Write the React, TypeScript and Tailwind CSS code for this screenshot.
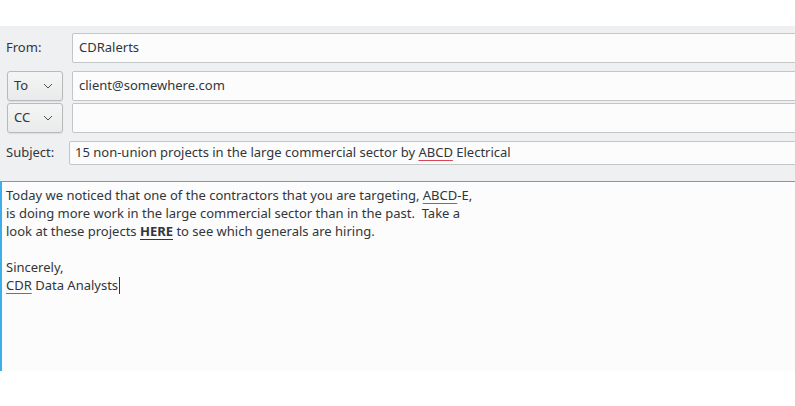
import React from "react";

const Chevron = () => (
  <svg width="10" height="6" viewBox="0 0 10 6" className="text-[#4d5257]">
    <path d="M1 1l4 4 4-4" fill="none" stroke="currentColor" strokeWidth="1" />
  </svg>
);

const Combo = ({ label }: { label: string }) => (
  <div className="flex h-[30px] w-[56px] shrink-0 items-center justify-between rounded-[3px] border border-[#b8babc] bg-gradient-to-b from-[#f5f5f5] to-[#e9eaeb] pl-[6px] pr-[9px] shadow-[0_1px_1px_rgba(0,0,0,0.08)]">
    <span>{label}</span>
    <Chevron />
  </div>
);

const Field = ({ children, className = "" }: { children?: React.ReactNode; className?: string }) => (
  <div
    className={`-mr-[4px] flex flex-1 items-center whitespace-pre rounded-[2px] border border-[#c3c5c7] bg-[#fcfcfc] ${className}`}
  >
    {children}
  </div>
);

const Misspelled = ({ children }: { children: React.ReactNode }) => (
  <span className="underline decoration-[#da4453] decoration-1 underline-offset-[3px]">{children}</span>
);

export default function App() {
  return (
    <div className="h-[406px] w-[795px] overflow-hidden bg-white font-['Noto_Sans',sans-serif] text-[13px] text-[#31363b]">
      <div className="h-[26px]" />
      <div className="flex flex-col bg-[#eff0f1] pt-[7px] pb-[16px]">
        <div className="flex h-[30px] items-center">
          <span className="w-[72px] shrink-0 pl-[6px]">From:</span>
          <Field className="h-[30px] pl-[6px]">CDRalerts</Field>
        </div>
        <div className="mt-[8px] flex h-[30px] items-center gap-[9px] pl-[7px]">
          <Combo label="To" />
          <Field className="h-[30px] pl-[6px]">client@somewhere.com</Field>
        </div>
        <div className="mt-[2px] flex h-[30px] items-center gap-[9px] pl-[7px]">
          <Combo label="CC" />
          <Field className="h-[30px] pl-[6px]" />
        </div>
        <div className="mt-[8px] flex h-[24px] items-center">
          <span className="w-[69px] shrink-0 pl-[6px]">Subject:</span>
          <Field className="h-[24px] pl-[5px]">
            15 non-union projects in the large commercial sector by <Misspelled>ABCD</Misspelled> Electrical
          </Field>
        </div>
      </div>
      <div className="-mr-[4px] h-[190px] whitespace-pre border-t border-l-2 border-[#3daee9] bg-[#fcfcfc] pl-[4px] pt-[4px] leading-[18px]">
        <p>
          Today we noticed that one of the contractors that you are targeting, <Misspelled>ABCD</Misspelled>-E,
        </p>
        <p>is doing more work in the large commercial sector than in the past.  Take a</p>
        <p>
          look at these projects <b className="font-bold underline underline-offset-[3px]">HERE</b> to see which generals are hiring.
        </p>
        <p> </p>
        <p>Sincerely,</p>
        <p className="flex items-center">
          <Misspelled>CDR</Misspelled> Data Analysts
          <span className="ml-[1px] inline-block h-[17px] w-px bg-[#31363b]" />
        </p>
      </div>
    </div>
  );
}
